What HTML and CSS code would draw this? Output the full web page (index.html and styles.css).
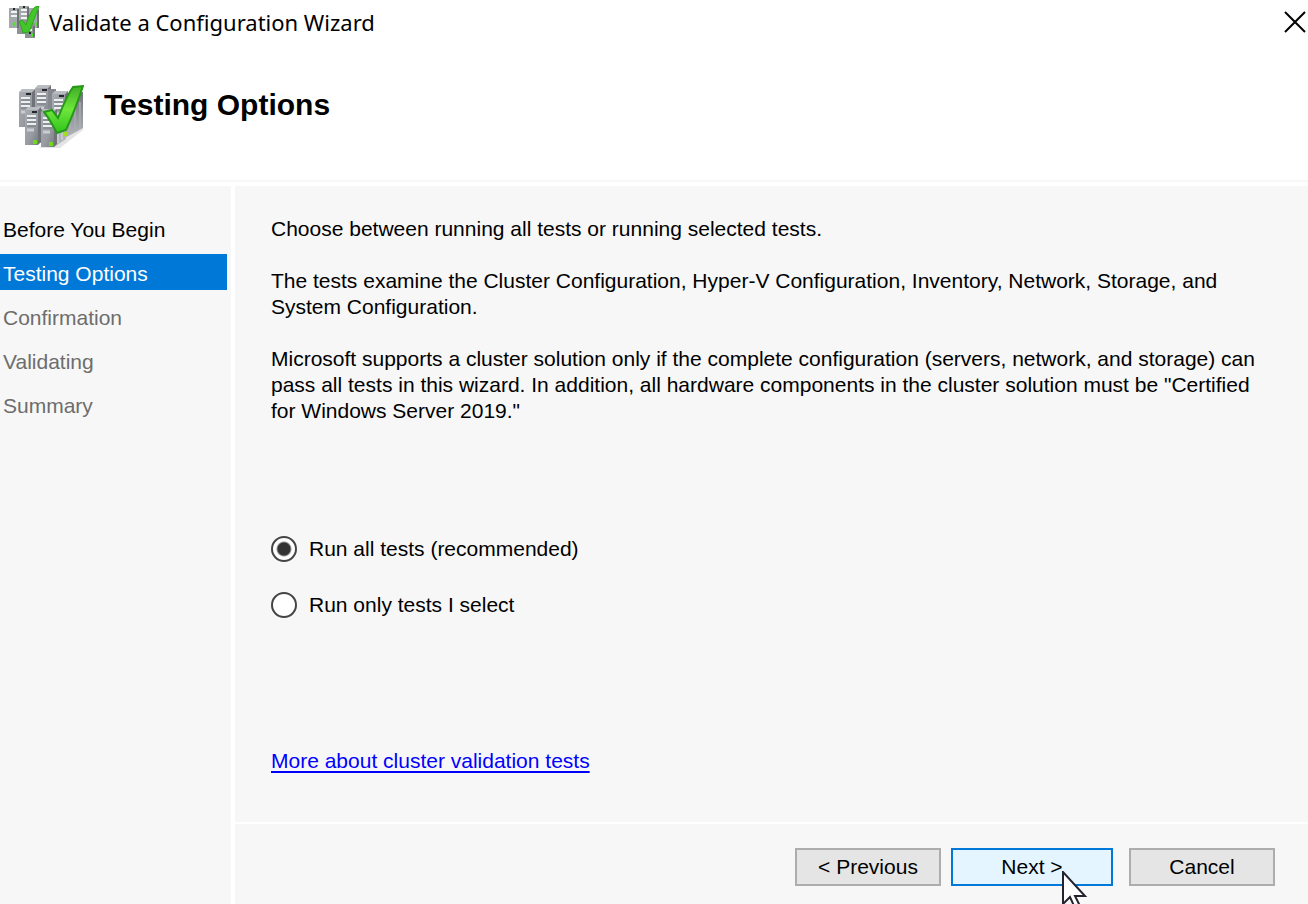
FILE: index.html
```html
<!DOCTYPE html>
<html lang="en">
<head>
    <meta charset="UTF-8">
    <meta name="viewport" content="width=device-width, initial-scale=1.0">
    <title>Validate a Configuration Wizard</title>
    <link rel="stylesheet" href="styles.css">
</head>
<body>
    <div class="wizard">
        <header class="title-bar">
            <!-- Simplified racks for the small size -->
            <svg class="title-icon" viewBox="0 0 32 32" aria-hidden="true">
                <path d="M0 2 H10 V22 H0 Z M10 0 H20 V24 H10 Z M20 2 H30 V22 H20 Z" fill="#a3a8aa"/>
                <path d="M8 14 H18 V28 H8 Z M16 17 H26 V32 H16 Z" fill="#8d9395"/>
                <path d="M9 3 V22 M19 1 V20 M29 4 V22 M25 20 V31" stroke="#6d7275" stroke-width="2"/>
                <path d="M2 6 H8 M2 10 H8 M12 4 H18 M12 8 H18 M12 12 H18 M18 24 H23" stroke="#f2f3f3" stroke-width="2"/>
                <path d="M4 3 H6 M14 1 H16 M20 27 H22" stroke="#222526" stroke-width="2"/>
                <path d="M4 18 H6 M26 18 H28 M22 29 H24" stroke="#3fef14" stroke-width="3"/>
                <path d="M10 16 L13 14 L17 19 C19 12 22 5 26 1 L30 0 C27 8 24 17 20 26 L14 27 C13 23 12 19 10 16 Z" fill="#42c62a" stroke="#2fa81c"/>
            </svg>
            <span class="title-text">Validate a Configuration Wizard</span>
            <button type="button" class="close-button" aria-label="Close">
                <svg viewBox="0 0 20 20" aria-hidden="true"><path d="M0 0 L20 20 M20 0 L0 20"/></svg>
            </button>
        </header>

        <div class="banner">
            <svg class="banner-icon" viewBox="0 0 66 66" aria-hidden="true">
                <defs>
                    <linearGradient id="steel" x1="0" x2="1" y1="0" y2="1">
                        <stop offset="0" stop-color="#a9adb2"/>
                        <stop offset="0.6" stop-color="#989ca2"/>
                        <stop offset="1" stop-color="#777b82"/>
                    </linearGradient>
                    <linearGradient id="side" x1="0" x2="0" y1="0" y2="1">
                        <stop offset="0" stop-color="#6f7379"/>
                        <stop offset="1" stop-color="#b4b7bb"/>
                    </linearGradient>
                    <linearGradient id="check" x1="0" x2="0" y1="0" y2="1">
                        <stop offset="0" stop-color="#3fae26"/>
                        <stop offset="0.5" stop-color="#6ee63a"/>
                        <stop offset="1" stop-color="#2fc41c"/>
                    </linearGradient>
                    <g id="rack">
                        <path d="M0 3 L3 0 H16 L13 3 Z" fill="#b9bcc0"/>
                        <path d="M13 3 L16 0 V35 L13 38 Z" fill="#6f7379"/>
                        <rect y="3" width="13" height="35" fill="url(#steel)"/>
                        <path d="M7 5 H12" stroke="#24272b" stroke-width="2"/>
                        <path d="M2 9 H11 M2 13 H11 M2 17 H11" stroke="#eceeef" stroke-width="2"/>
                        <path d="M2 11 H11 M2 15 H11 M2 19 H11" stroke="#777b82"/>
                        <path d="M2 23 H9" stroke="#c9ccd0" stroke-width="3"/>
                    </g>
                </defs>
                <path d="M34 58 L58 46 L65 42 V46 L42 64 H20 Z" fill="#e4e4e4"/>
                <use href="#rack" x="1" y="5"/>
                <use href="#rack" x="17" y="1"/>
                <path d="M30 5 H38 V30 H30 Z" fill="#85898f"/>
                <path d="M47 12 L65 8 V44 L47 54 Z" fill="url(#side)"/>
                <path d="M52 22 V50 M57 20 V47 M62 18 V45" stroke="#a9acb1" stroke-width="1.5"/>
                <use href="#rack" x="34" y="7"/>
                <path d="M18 28 L24 25 V58 L18 60 Z" fill="#6f7379"/>
                <use href="#rack" x="7" y="23"/>
                <path d="M34 36 L48 32 V55 L36 63 Z" fill="#b0b3b8"/>
                <path d="M40 38 V59 M44 38 V56" stroke="#cdcfd2" stroke-width="1.5"/>
                <use href="#rack" x="23" y="25"/>
                <rect x="15" y="56" width="4" height="4" fill="#70da18"/>
                <rect x="31" y="58" width="4" height="4" fill="#70da18"/>
                <rect x="46" y="48" width="3" height="4" fill="#a6df20"/>
                <path d="M26 28 L34 26 L40 34 C44 24 49 11 55 3 L65 2 C60 17 54 33 48 46 L39 49 C35 42 31 34 26 28 Z" fill="url(#check)" stroke="#27971a" stroke-width="2"/>
            </svg>
            <h1>Testing Options</h1>
        </div>

        <div class="body">
            <nav class="steps">
                <ol>
                    <li class="done">Before You Begin</li>
                    <li class="current" aria-current="step">Testing Options</li>
                    <li>Confirmation</li>
                    <li>Validating</li>
                    <li>Summary</li>
                </ol>
            </nav>

            <form class="page">
                <main class="content">
                    <div class="intro">
                        <p>Choose between running all tests or running selected tests.</p>
                        <p>The tests examine the Cluster Configuration, Hyper-V Configuration, Inventory, Network, Storage, and<br>System Configuration.</p>
                        <p>Microsoft supports a cluster solution only if the complete configuration (servers, network, and storage) can<br>pass all tests in this wizard. In addition, all hardware components in the cluster solution must be "Certified<br>for Windows Server 2019."</p>
                    </div>

                    <div class="options">
                        <div class="option">
                            <input type="radio" name="tests" id="runAll" checked>
                            <label for="runAll">Run all tests (recommended)</label>
                        </div>
                        <div class="option">
                            <input type="radio" name="tests" id="runSelected">
                            <label for="runSelected">Run only tests I select</label>
                        </div>
                    </div>

                    <a class="more-link" href="#">More about cluster validation tests</a>
                </main>

                <footer class="actions">
                    <button type="button" class="button">&lt; Previous</button>
                    <button type="button" class="button button-next">Next &gt;
                        <svg class="pointer" viewBox="0 0 26 40" aria-hidden="true"><path d="M1 1 V33 L8 26 L13 37 L18 35 L13 25 H23 Z"/></svg>
                    </button>
                    <button type="button" class="button">Cancel</button>
                </footer>
            </form>
        </div>
    </div>
</body>
</html>
```
FILE: styles.css
```css
* {
    margin: 0;
    padding: 0;
    box-sizing: border-box;
}

body {
    background-color: #ffffff;
    color: #000000;
    font-family: "Liberation Sans", Arial, sans-serif;
    font-size: 21px;
    line-height: 26px;
    overflow: hidden;
}

.wizard {
    display: flex;
    flex-direction: column;
    min-height: 100vh;
}

.title-bar {
    display: flex;
    align-items: center;
    gap: 8px;
    height: 44px;
    padding: 0 3px 0 9px;
}

.title-icon {
    width: 32px;
    height: 32px;
}

.title-text {
    flex: 1;
    font-family: "Noto Sans", "Segoe UI", sans-serif;
    font-size: 22px;
}

.close-button {
    display: flex;
    background: none;
    border: none;
}

.close-button svg {
    width: 20px;
    height: 20px;
    overflow: visible;
    stroke: #000000;
    stroke-width: 2;
}

.banner {
    display: flex;
    gap: 20px;
    height: 138px;
    padding: 40px 18px 0;
    border-bottom: 2px solid #f7f7f7;
}

.banner-icon {
    width: 66px;
    height: 66px;
}

h1 {
    font-size: 30px;
    line-height: 42px;
}

.body {
    flex: 1;
    display: flex;
    gap: 4px;
    margin-top: 4px;
}

.steps {
    flex: 0 0 231px;
    padding: 24px 4px 0 0;
    background-color: #f7f7f7;
}

.steps ol {
    display: flex;
    flex-direction: column;
    gap: 8px;
    list-style: none;
}

.steps li {
    padding: 4px 3px 0;
    line-height: 32px;
    color: #6d6d6d;
}

.steps .done {
    color: #000000;
}

.steps .current {
    background-color: #0078d7;
    color: #ffffff;
}

.page {
    flex: 1;
    display: flex;
    flex-direction: column;
    background-color: #f7f7f7;
}

.content {
    flex: 1;
    padding: 30px 36px;
}

.intro {
    display: flex;
    flex-direction: column;
    gap: 26px;
}

.options {
    display: flex;
    flex-direction: column;
    gap: 30px;
    margin: 112px 0 130px;
}

.option {
    display: flex;
    align-items: center;
    gap: 12px;
}

.option input {
    appearance: none;
    width: 26px;
    height: 26px;
    border: 2px solid #444444;
    border-radius: 50%;
    background-color: #ffffff;
}

.option input:checked {
    background-image: radial-gradient(circle, #333333 6px, transparent 8px);
}

.more-link {
    color: #0000ff;
    text-decoration-thickness: 2px;
    text-underline-offset: 3px;
}

.actions {
    display: flex;
    justify-content: flex-end;
    padding: 24px 33px 18px;
    border-top: 2px solid #ffffff;
}

.button {
    width: 146px;
    height: 38px;
    border: 2px solid #adadad;
    background-color: #e5e5e5;
    color: #000000;
    font: inherit;
}

.button-next {
    position: relative;
    width: 162px;
    margin: 0 16px 0 10px;
    border-color: #0078d7;
    background-color: #e5f5ff;
}

/* Mouse pointer resting on the Next button */
.pointer {
    position: absolute;
    top: 21px;
    left: 109px;
    width: 26px;
    height: 40px;
    fill: #ffffff;
    stroke: #24242e;
    stroke-width: 2;
}
```
